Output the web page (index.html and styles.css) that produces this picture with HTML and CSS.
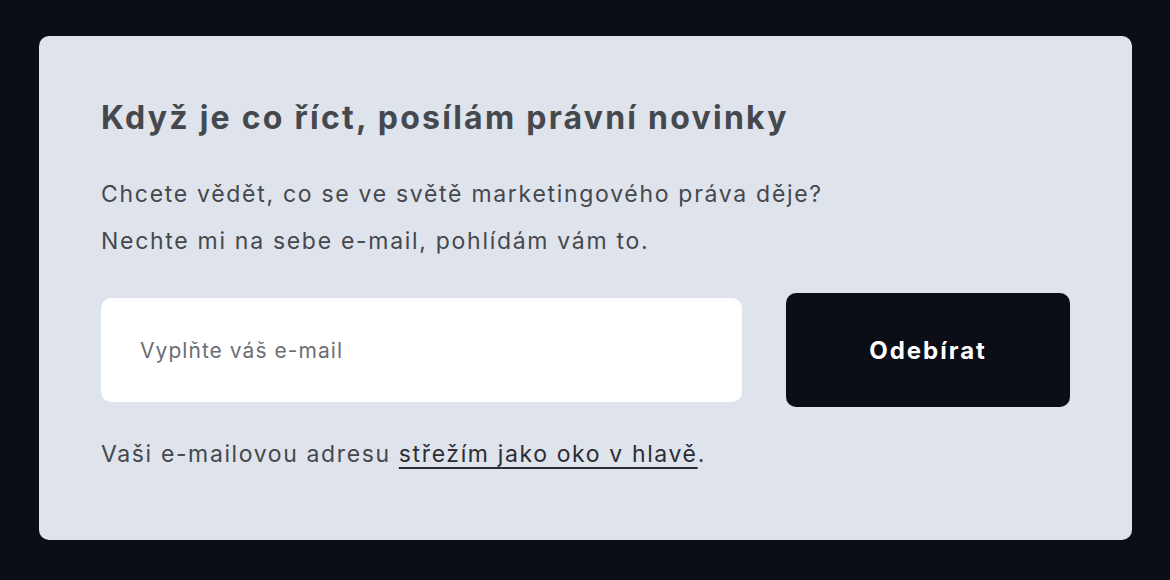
FILE: index.html
```html
<!DOCTYPE html>
<html lang="cs">
<head>
<meta charset="utf-8">
<link rel="stylesheet" href="styles.css">
</head>
<body>
<div class="card">
  <h2 class="title">Když je co říct, posílám právní novinky</h2>
  <p class="lead">Chcete vědět, co se ve světě marketingového práva děje?<br>Nechte mi na sebe e-mail, pohlídám vám to.</p>
  <form class="form">
    <div class="input">Vyplňte váš e-mail</div>
    <button type="button" class="btn">Odebírat</button>
  </form>
  <p class="note">Vaši e-mailovou adresu <a href="#" class="link">střežím jako oko v hlavě</a>.</p>
</div>
</body>
</html>
```
FILE: styles.css
```css
html, body {
  margin: 0;
  padding: 0;
  background: #0b0e16;
  width: 1170px;
  height: 580px;
  overflow: hidden;
}
body {
  font-family: Inter, "Noto Sans", sans-serif;
  color: #45484d;
  padding: 36px 38px 0 39px;
  box-sizing: border-box;
}
.card {
  background: #dfe3ec;
  border-radius: 10px;
  height: 504px;
  box-sizing: border-box;
  padding: 62px 62px 0 62px;
}
.title {
  margin: 0;
  font-size: 32px;
  font-weight: 700;
  letter-spacing: 2.25px;
  line-height: 40px;
  color: #45484d;
}
.lead {
  margin: 33px 0 0;
  font-size: 23px;
  letter-spacing: 1.7px;
  line-height: 47px;
}
.form {
  margin: 28px 0 0;
  display: flex;
  align-items: center;
  gap: 44px;
}
.input {
  flex: 0 0 641px;
  height: 104px;
  box-sizing: border-box;
  background: #fff;
  border-radius: 10px;
  padding: 0 39px;
  display: flex;
  align-items: center;
  font-size: 21px;
  letter-spacing: 1.05px;
  color: #6b6e74;
}
.btn {
  flex: 1;
  height: 114px;
  background: #0b0e16;
  color: #fff;
  border: 0;
  border-radius: 10px;
  font-family: inherit;
  font-size: 24px;
  font-weight: 700;
  letter-spacing: 2px;
}
.note {
  margin: 24px 0 0;
  font-size: 23px;
  letter-spacing: 1.62px;
  line-height: 46px;
}
.link {
  color: #2b2e33;
  text-decoration: underline;
  text-underline-offset: 5px;
  text-decoration-thickness: 2px;
}
```
